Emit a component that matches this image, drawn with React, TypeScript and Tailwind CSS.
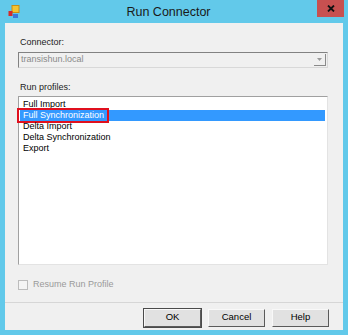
const profiles = [
  "Full Import",
  "Full Synchronization",
  "Delta Import",
  "Delta Synchronization",
  "Export",
];

function AppIcon() {
  return (
    <svg width="12" height="14" viewBox="0 0 12 14">
      <rect x="4" y="0.5" width="7" height="7" fill="#f5c431" stroke="#c98e12" />
      <rect x="0.5" y="6" width="4" height="5" fill="#d42a2a" />
      <rect x="5" y="9" width="5" height="4" fill="#3c78d8" />
    </svg>
  );
}

function Button({ label, primary }: { label: string; primary?: boolean }) {
  return (
    <div
      className={
        "w-[57px] h-[18px] flex items-center justify-center bg-[#e1e1e1] border border-t-[#f8f8f8] border-l-[#f8f8f8] border-r-[#5a5a5a] border-b-[#5a5a5a] " +
        (primary ? "outline outline-1 outline-[#4a4a4a]" : "")
      }
    >
      <span className="text-[9.5px] text-black">{label}</span>
    </div>
  );
}

export default function App() {
  return (
    <div
      className="w-[348px] h-[335px] bg-[#62c9ea] flex flex-col overflow-hidden"
      style={{ fontFamily: '"Liberation Sans", Arial, sans-serif' }}
    >
      {/* title bar */}
      <div className="h-[23px] flex items-start relative">
        <div className="ml-[8px] mt-[5px]">
          <AppIcon />
        </div>
        <div className="flex-1 text-center text-[12.5px] text-[#1a1a1a] mt-[3px]">
          Run Connector
        </div>
        <div className="w-[27px] h-[17px] bg-[#c75050] mr-[4px] flex items-center justify-center">
          <svg width="8" height="7" viewBox="0 0 8 7">
            <path d="M1 0.5 L7 6.5 M7 0.5 L1 6.5" stroke="#111" strokeWidth="1.8" />
          </svg>
        </div>
      </div>

      {/* client area */}
      <div className="mx-[5px] mb-[5px] flex-1 bg-[#f0f0f0] flex flex-col text-[9px] text-[#1c1c1c]">
        <div className="px-[13px] pr-[15px] flex flex-col">
          <div className="mt-[13px] h-[12px] leading-[12px] pl-[2px]">Connector:</div>
          <div className="mt-[4px] h-[16px] border border-t-[#828282] border-l-[#828282] border-r-[#d8d8d8] border-b-[#d8d8d8] bg-[#f0f0f0] flex items-center">
            <span className="flex-1 pl-[2px] text-[#8a8a8a]">transishun.local</span>
            <div className="w-[12px] h-[12px] mr-[1px] flex items-center justify-center border-r border-b border-[#8a8a8a]">
              <svg width="5" height="3" viewBox="0 0 5 3">
                <path d="M0 0 H5 L2.5 3 Z" fill="#9a9a9a" />
              </svg>
            </div>
          </div>

          <div className="mt-[13px] h-[12px] leading-[12px] pl-[2px]">Run profiles:</div>
          <div className="mt-[3px] h-[169px] bg-white border border-t-[#a0a0a0] border-l-[#a0a0a0] border-r-[#e3e3e3] border-b-[#e3e3e3] pt-[2px] px-[1px]">
            {profiles.map((p, i) => (
              <div
                key={p}
                className={
                  "relative h-[11px] leading-[11px] pl-[3px] mr-[1px] " +
                  (i === 1 ? "bg-[#3399ff] text-white" : "text-black")
                }
              >
                {p}
                {i === 1 && (
                  <div className="absolute left-[-3px] top-[-2px] w-[92px] h-[15px] border-2 border-[#e0101e]" />
                )}
              </div>
            ))}
          </div>

          <div className="mt-[13px] flex items-center gap-[5px]">
            <div className="w-[10px] h-[10px] border border-[#bcbcbc] bg-[#f4f4f4]" />
            <span className="text-[#9a9a9a]">Resume Run Profile</span>
          </div>
        </div>

        <div className="mt-[10px] border-t border-[#d6d6d6]" />

        <div className="flex justify-end gap-[7px] pr-[14px] mt-[6px]">
          <Button label="OK" primary />
          <Button label="Cancel" />
          <Button label="Help" />
        </div>
      </div>
    </div>
  );
}
